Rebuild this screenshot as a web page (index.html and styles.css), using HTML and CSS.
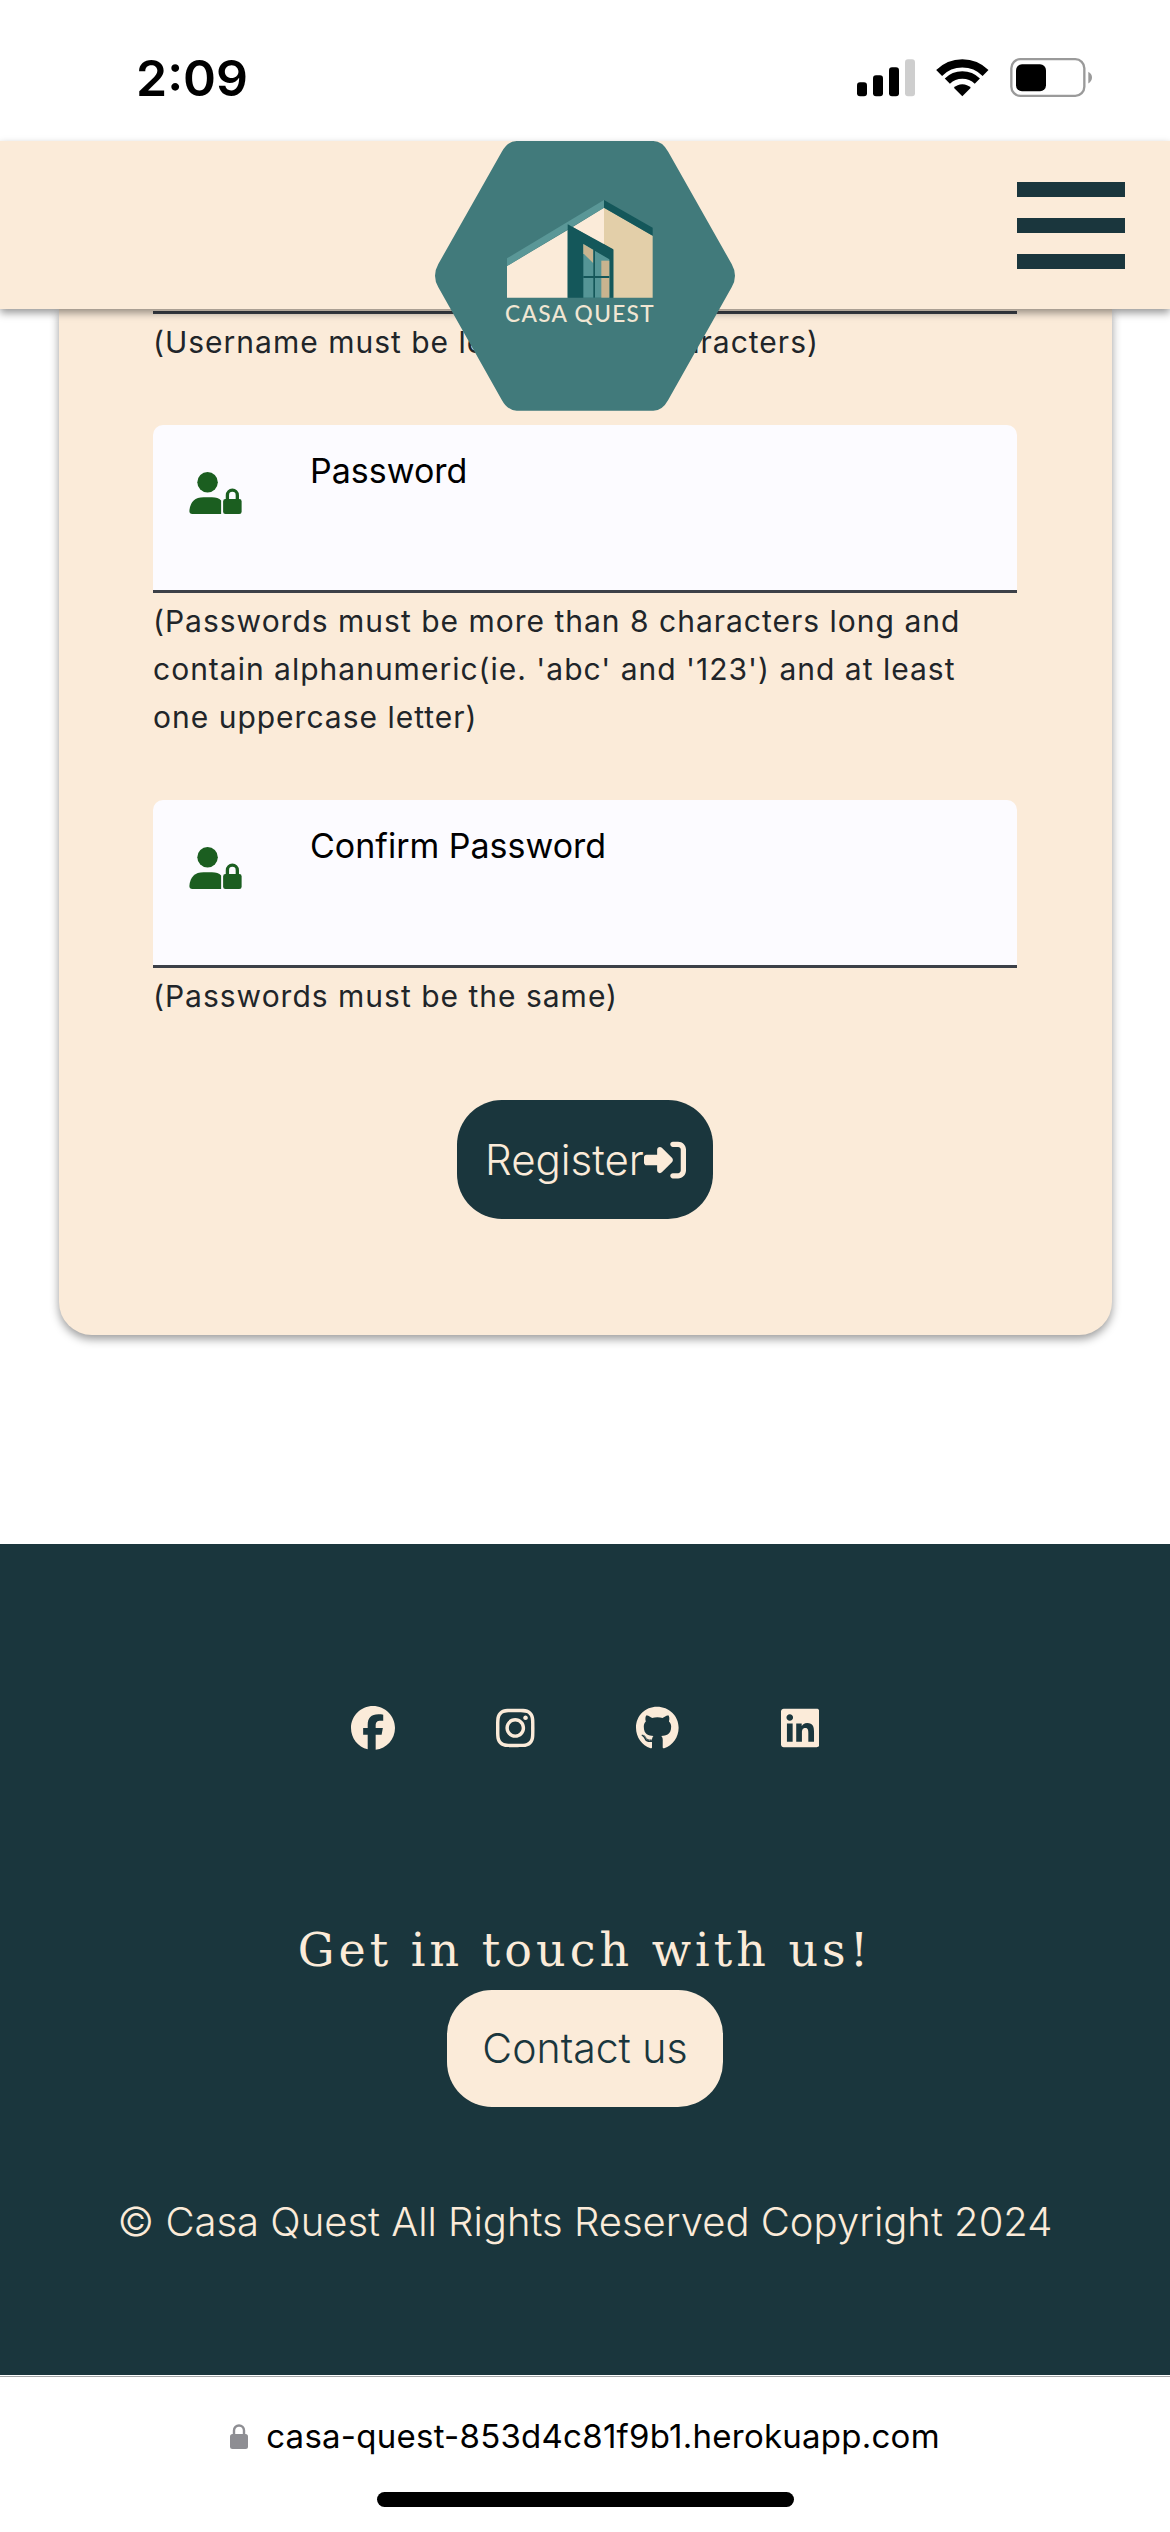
FILE: index.html
```html
<!DOCTYPE html>
<html>
<head>
    <title>Casa Quest - Register</title>
    <link rel="stylesheet" href="styles.css">
</head>
<body>
    <div class="status-bar">
        <span class="status-time">2:09</span>
        <svg class="status-icons" viewBox="108 54 705 116" width="235" height="39">
            <rect x="108" y="126" width="30" height="42" rx="9"/>
            <rect x="156" y="105" width="30" height="63" rx="9"/>
            <rect x="204" y="81" width="30" height="87" rx="9"/>
            <rect x="252" y="57" width="30" height="111" rx="9" fill="#cecece"/>
            <path d="M354.4 98.4A98.5 98.5 0 0 1 493.6 98.4" fill="none" stroke="#000" stroke-width="25"/>
            <path d="M379 123A64 64 0 0 1 469 123" fill="none" stroke="#000" stroke-width="22"/>
            <path d="M424 168L398.5 142.5A36 36 0 0 1 449.5 142.5Z"/>
            <rect x="571" y="57" width="219" height="110" rx="27" fill="none" stroke="#9a9a9a" stroke-width="7"/>
            <rect x="585" y="72" width="90" height="81" rx="18"/>
            <path d="M802 95Q813 102 813 112Q813 123 802 130Z" fill="#9a9a9a"/>
        </svg>
    </div>

    <header class="site-header">
        <svg class="logo" viewBox="45 33 900 810" width="300" height="270">
            <path d="M290 33H700Q727 33 745 66L935 402Q955 437 935 472L745 809Q727 842 700 842H290Q263 842 245 809L55 472Q35 437 55 402L245 66Q263 33 290 33Z" fill="#417a7b"/>
            <path d="M261 408L443 300V503H261Z" fill="#fbebd9"/>
            <path d="M458 291L552 233V345Z" fill="#fbebd9"/>
            <path d="M261 385L552 210V233L261 408Z" fill="#5a9797"/>
            <path d="M552 233L698 317V503H580V360L552 343Z" fill="#e3cfa9"/>
            <path d="M552 210L698 293V317L552 233Z" fill="#14575a"/>
            <path d="M443 283L580 358V503H443Z" fill="#14575a"/>
            <path d="M490 342L568 388V503H490Z" fill="#559596"/>
            <path d="M490 342L520 360V400L490 370Z" fill="#c9b48f"/>
            <rect x="544" y="392" width="24" height="111" fill="#c9b48f"/>
            <rect x="520" y="360" width="5" height="143" fill="#14575a"/>
            <rect x="490" y="438" width="78" height="6" fill="#14575a"/>
            <text class="logo-text" x="480" y="575" text-anchor="middle">CASA QUEST</text>
        </svg>
        <div class="menu-btn">
            <span></span>
            <span></span>
            <span></span>
        </div>
    </header>

    <main class="page-main">
        <form class="register-card">
            <div class="field-edge"></div>
            <p class="field-help">(Username must be less than 15 characters)</p>

            <div class="field">
                <svg class="field-icon" viewBox="147 186 158 127" width="53" height="42">
                    <circle cx="202" cy="217" r="31"/>
                    <path d="M147 304Q150 262 190 262H215Q234 262 243 272V313H156Q147 313 147 304Z"/>
                    <rect x="249" y="268" width="56" height="45" rx="7"/>
                    <path d="M262 272V256A15 15 0 0 1 292 256V272" fill="none" stroke="#1b5e20" stroke-width="10"/>
                </svg>
                <label class="field-label">Password</label>
            </div>
            <p class="field-help">(Passwords must be more than 8 characters long and contain alphanumeric(ie. 'abc' and '123') and at least one uppercase letter)</p>

            <div class="field">
                <svg class="field-icon" viewBox="147 186 158 127" width="53" height="42">
                    <circle cx="202" cy="217" r="31"/>
                    <path d="M147 304Q150 262 190 262H215Q234 262 243 272V313H156Q147 313 147 304Z"/>
                    <rect x="249" y="268" width="56" height="45" rx="7"/>
                    <path d="M262 272V256A15 15 0 0 1 292 256V272" fill="none" stroke="#1b5e20" stroke-width="10"/>
                </svg>
                <label class="field-label">Confirm Password</label>
            </div>
            <p class="field-help">(Passwords must be the same)</p>

            <button class="register-btn" type="button">Register
                <svg viewBox="0 0 512 512" width="42" height="42"><path d="M217.9 105.9L340.7 228.7c7.2 7.2 11.3 17.1 11.3 27.3s-4.1 20.1-11.3 27.3L217.9 406.1c-6.4 6.4-15 9.9-24 9.9c-18.7 0-33.9-15.2-33.9-33.9l0-62.1L32 320c-17.7 0-32-14.3-32-32l0-64c0-17.7 14.3-32 32-32l128 0 0-62.1c0-18.7 15.2-33.9 33.9-33.9c9 0 17.6 3.6 24 9.9zM352 416l64 0c17.7 0 32-14.3 32-32l0-256c0-17.7-14.3-32-32-32l-64 0c-17.7 0-32-14.3-32-32s14.3-32 32-32l64 0c53 0 96 43 96 96l0 256c0 53-43 96-96 96l-64 0c-17.7 0-32-14.3-32-32s14.3-32 32-32z"/></svg>
            </button>
        </form>
    </main>

    <footer class="site-footer">
        <div class="social-links">
            <svg viewBox="0 0 512 512" height="44"><path d="M512 256C512 114.6 397.4 0 256 0S0 114.6 0 256C0 376 82.7 476.8 194.2 504.5V334.2H141.4V256h52.8V222.3c0-87.1 39.4-127.5 125-127.5c16.2 0 44.2 3.2 55.7 6.4V172c-6-.6-16.5-1-29.6-1c-42 0-58.2 15.9-58.2 57.2V256h83.6l-14.4 78.2H287V510.1C413.8 494.8 512 386.9 512 256h0z"/></svg>
            <svg viewBox="0 0 448 512" height="44"><path d="M224.1 141c-63.6 0-114.9 51.3-114.9 114.9s51.3 114.9 114.9 114.9S339 319.5 339 255.9 287.7 141 224.1 141zm0 189.6c-41.1 0-74.7-33.5-74.7-74.7s33.5-74.7 74.7-74.7 74.7 33.5 74.7 74.7-33.6 74.7-74.7 74.7zm146.4-194.3c0 14.9-12 26.8-26.8 26.8-14.9 0-26.8-12-26.8-26.8s12-26.8 26.8-26.8 26.8 12 26.8 26.8zm76.1 27.2c-1.7-35.9-9.9-67.7-36.2-93.9-26.2-26.2-58-34.4-93.9-36.2-37-2.1-147.9-2.1-184.9 0-35.8 1.7-67.6 9.9-93.9 36.1s-34.4 58-36.2 93.9c-2.1 37-2.1 147.9 0 184.9 1.7 35.9 9.9 67.7 36.2 93.9s58 34.4 93.9 36.2c37 2.1 147.9 2.1 184.9 0 35.9-1.7 67.7-9.9 93.9-36.2 26.2-26.2 34.4-58 36.2-93.9 2.1-37 2.1-147.8 0-184.8zM398.8 388c-7.8 19.6-22.9 34.7-42.6 42.6-29.5 11.7-99.5 9-132.1 9s-102.7 2.6-132.1-9c-19.6-7.8-34.7-22.9-42.6-42.6-11.7-29.5-9-99.5-9-132.1s-2.6-102.7 9-132.1c7.8-19.6 22.9-34.7 42.6-42.6 29.5-11.7 99.5-9 132.1-9s102.7-2.6 132.1 9c19.6 7.8 34.7 22.9 42.6 42.6 11.7 29.5 9 99.5 9 132.1s2.7 102.7-9 132.1z"/></svg>
            <svg viewBox="0 0 496 512" height="44"><path d="M165.9 397.4c0 2-2.3 3.6-5.2 3.6-3.3 0-5.6-1.6-5.6-3.6 0-2 2.3-3.6 5.2-3.6 3-.3 5.6 1.3 5.6 3.6zm-31.1-4.5c-.7 2 1.3 4.3 4.3 4.9 2.6 1 5.6 0 6.2-2s-1.3-4.3-4.3-5.2c-2.6-.7-5.5.3-6.2 2.3zm44.2-1.7c-2.9.7-4.9 2.6-4.6 4.9.3 2 2.9 3.3 5.9 2.6 2.9-.7 4.9-2.6 4.6-4.6-.3-1.9-3-3.2-5.9-2.9zM244.8 8C106.1 8 0 113.3 0 252c0 110.9 69.8 205.8 169.5 239.2 12.8 2.3 17.3-5.6 17.3-12.1 0-6.2-.3-40.4-.3-61.4 0 0-70 15-84.7-29.8 0 0-11.4-29.1-27.8-36.6 0 0-22.9-15.7 1.6-15.4 0 0 24.9 2 38.6 25.8 21.9 38.6 58.6 27.5 72.9 20.9 2.3-16 8.8-27.1 16-33.7-55.9-6.2-112.3-14.3-112.3-110.5 0-27.5 7.6-41.3 23.6-58.9-2.6-6.5-11.1-33.3 2.6-67.9 20.9-6.5 69 27 69 27 20-5.6 41.5-8.5 62.8-8.5s42.8 2.9 62.8 8.5c0 0 48.1-33.6 69-27 13.7 34.7 5.2 61.4 2.6 67.9 16 17.7 25.8 31.5 25.8 58.9 0 96.5-58.9 104.2-114.8 110.5 9.2 7.9 17 22.9 17 46.4 0 33.7-.3 75.4-.3 83.6 0 6.5 4.6 14.4 17.3 12.1C428.2 457.8 496 362.9 496 252 496 113.3 383.5 8 244.8 8zM97.2 352.9c-1.3 1-1 3.3.7 5.2 1.6 1.6 3.9 2.3 5.2 1 1.3-1 1-3.3-.7-5.2-1.6-1.6-3.9-2.3-5.2-1zm-10.8-8.1c-.7 1.3.3 2.9 2.3 3.9 1.6 1 3.6.7 4.3-.7.7-1.3-.3-2.9-2.3-3.9-2-.6-3.6-.3-4.3.7zm32.4 35.6c-1.6 1.3-1 4.3 1.3 6.2 2.3 2.3 5.2 2.6 6.5 1 1.3-1.3.7-4.3-1.3-6.2-2.2-2.3-5.2-2.6-6.5-1zm-11.4-14.7c-1.6 1-1.6 3.6 0 5.9 1.6 2.3 4.3 3.3 5.6 2.3 1.6-1.3 1.6-3.9 0-6.2-1.4-2.3-4-3.3-5.6-2z"/></svg>
            <svg viewBox="0 0 448 512" height="44"><path d="M416 32H31.9C14.3 32 0 46.5 0 64.3v383.4C0 465.5 14.3 480 31.9 480H416c17.6 0 32-14.5 32-32.3V64.3c0-17.8-14.4-32.3-32-32.3zM135.4 416H69V202.2h66.5V416zm-33.2-243c-21.3 0-38.5-17.3-38.5-38.5S80.9 96 102.2 96c21.2 0 38.5 17.3 38.5 38.5 0 21.3-17.2 38.5-38.5 38.5zm282.1 243h-66.4V312c0-24.8-.5-56.7-34.5-56.7-34.6 0-39.9 26.9-39.9 54.9V416h-66.4V202.2h63.7v29.2h.9c8.9-16.8 30.6-34.5 62.9-34.5 67.2 0 79.7 44.3 79.7 101.9V416z"/></svg>
        </div>
        <h2 class="footer-title">Get in touch with us!</h2>
        <a class="contact-btn">Contact us</a>
        <p class="copyright">© Casa Quest All Rights Reserved Copyright 2024</p>
    </footer>

    <div class="url-bar">
        <div class="url-row">
            <svg viewBox="0 0 18 25" width="18" height="25">
                <path d="M4 11V6.5A5 5 0 0 1 14 6.5V11" fill="none" stroke="#8e8e93" stroke-width="2.4"/>
                <rect x="0" y="10" width="18" height="15" rx="2.5" fill="#8e8e93"/>
            </svg>
            <span class="url-text">casa-quest-853d4c81f9b1.herokuapp.com</span>
        </div>
        <div class="home-bar"></div>
    </div>
</body>
</html>
```

FILE: styles.css
```css
body {
    margin: 0;
    width: 1170px;
    height: 2532px;
    overflow: hidden;
    background-color: #fff;
    font-family: "Inter", "Liberation Sans", sans-serif;
}

/* phone status bar */
.status-bar {
    height: 141px;
    display: flex;
    justify-content: space-between;
    align-items: flex-start;
    padding: 0 78px 0 136px;
    box-sizing: border-box;
}

.status-time {
    margin-top: 48px;
    font-size: 50px;
    line-height: 60px;
    font-weight: 600;
    color: #000;
}

.status-icons {
    margin-top: 58px;
}

/* header */
.site-header {
    position: relative;
    z-index: 2;
    height: 168px;
    display: flex;
    justify-content: flex-end;
    padding: 41px 45px 0 0;
    box-sizing: border-box;
    background-color: #fbebd9;
    box-shadow: 0 4px 8px rgba(0, 0, 0, 0.4);
}

.logo {
    position: absolute;
    left: 435px;
    top: 0;
}

.logo-text {
    font-family: "Lato", sans-serif;
    font-size: 68px;
    font-weight: 500;
    letter-spacing: 4px;
    fill: #f1e6d3;
}

.menu-btn {
    display: flex;
    flex-direction: column;
    gap: 21px;
    width: 108px;
}

.menu-btn span {
    height: 15px;
    background-color: #1a363d;
}

/* form card */
.page-main {
    padding: 0 58px 209px 59px;
}

.register-card {
    display: flex;
    flex-direction: column;
    padding: 2px 95px 116px 94px;
    background-color: #fbebd9;
    border-radius: 0 0 33px 33px;
    box-shadow: 0 4px 10px rgba(0, 0, 0, 0.4);
}

.field-edge {
    height: 3px;
    background-color: #3c4048;
}

.field {
    display: flex;
    align-items: flex-start;
    height: 165px;
    background-color: #fcfbff;
    border-bottom: 3px solid #3c4048;
    border-radius: 10px 10px 0 0;
}

.field-icon {
    flex-shrink: 0;
    margin: 47px 0 0 36px;
    fill: #1b5e20;
}

.field-label {
    margin: 25px 0 0 68px;
    font-size: 34px;
    line-height: 42px;
    color: #000;
}

.field-help {
    margin: 4px 0 59px 0;
    font-size: 30px;
    line-height: 48px;
    letter-spacing: 1px;
    color: #212529;
}

.register-btn {
    align-self: center;
    display: flex;
    align-items: center;
    height: 119px;
    margin-top: 21px;
    padding: 0 27px 0 28px;
    border: 0;
    border-radius: 45px;
    background-color: #1a363d;
    color: #fbebd9;
    fill: #fbebd9;
    font-family: "Inter", sans-serif;
    font-size: 42px;
    font-weight: 300;
}

/* footer */
.site-footer {
    height: 831px;
    display: flex;
    flex-direction: column;
    align-items: center;
    padding-top: 162px;
    box-sizing: border-box;
    background-color: #1a363d;
    color: #fbebd9;
}

.social-links {
    display: flex;
    gap: 101.5px;
    fill: #fbebd9;
}

.footer-title {
    margin: 170px 0 10px 0;
    font-family: "DejaVu Serif", serif;
    font-size: 46px;
    line-height: 60px;
    font-weight: 400;
    letter-spacing: 4px;
}

.contact-btn {
    width: 276px;
    height: 117px;
    border-radius: 45px;
    background-color: #fbebd9;
    color: #1a363d;
    font-family: "Inter", sans-serif;
    font-size: 41px;
    font-weight: 300;
    line-height: 117px;
    text-align: center;
}

.copyright {
    margin: 90px 0 0 0;
    font-family: "Inter", sans-serif;
    font-size: 40px;
    font-weight: 300;
    line-height: 50px;
}

/* browser url bar */
.url-bar {
    margin-top: 1px;
    border-top: 1px solid #a3a6a8;
    display: flex;
    flex-direction: column;
    align-items: center;
    padding-top: 44px;
}

.url-row {
    display: flex;
    align-items: center;
    gap: 18px;
    height: 30px;
}

.url-text {
    font-size: 33px;
    line-height: 30px;
    letter-spacing: 0.25px;
    color: #000;
}

.home-bar {
    width: 417px;
    height: 15px;
    margin-top: 41px;
    border-radius: 8px;
    background-color: #000;
}
```
